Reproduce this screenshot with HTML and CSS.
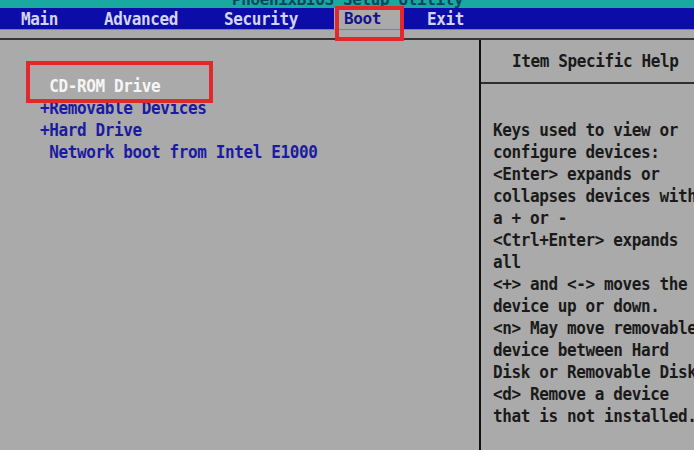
FILE: index.html
```html
<!DOCTYPE html>
<html>
<head>
<meta charset="utf-8">
<link rel="stylesheet" href="styles.css">
</head>
<body>
<div class="screen">
  <header class="top">
    <div class="title-strip"><div class="title">PhoenixBIOS Setup Utility</div></div>
    <nav class="menu">
      <span class="menu-item">Main</span>
      <span class="menu-item">Advanced</span>
      <span class="menu-item">Security</span>
      <span class="menu-item active">Boot</span>
      <span class="menu-item">Exit</span>
    </nav>
    <div class="band"></div>
    <div class="mark mark-boot"></div>
  </header>
  <main class="body">
    <section class="left">
      <div class="items">
        <div class="item selected"> CD-ROM Drive</div>
        <div class="item">+Removable Devices</div>
        <div class="item">+Hard Drive</div>
        <div class="item"> Network boot from Intel E1000</div>
      </div>
      <div class="mark mark-item"></div>
    </section>
    <aside class="help">
      <div class="help-head"><span class="tall">Item Specific Help</span></div>
      <div class="help-text">
        <div class="line">Keys used to view or</div>
        <div class="line">configure devices:</div>
        <div class="line">&lt;Enter&gt; expands or</div>
        <div class="line">collapses devices with</div>
        <div class="line">a + or -</div>
        <div class="line">&lt;Ctrl+Enter&gt; expands</div>
        <div class="line">all</div>
        <div class="line">&lt;+&gt; and &lt;-&gt; moves the</div>
        <div class="line">device up or down.</div>
        <div class="line">&lt;n&gt; May move removable</div>
        <div class="line">device between Hard</div>
        <div class="line">Disk or Removable Disk</div>
        <div class="line">&lt;d&gt; Remove a device</div>
        <div class="line">that is not installed.</div>
      </div>
    </aside>
  </main>
</div>
</body>
</html>
```
FILE: styles.css
```css
* { box-sizing: border-box; margin: 0; padding: 0; }
html, body { width: 694px; height: 450px; overflow: hidden; }
body {
  background: #aaaaaa;
  font-family: "DejaVu Sans Mono", "Liberation Mono", monospace;
  font-weight: bold;
  font-size: 16px;
  letter-spacing: -0.38px;
}
.screen { width: 694px; height: 450px; display: flex; flex-direction: column; }
.top { position: relative; flex: none; }
.title-strip { height: 8px; background: #19a9a0; overflow: hidden; }
.title {
  margin-top: -8px;
  padding-left: 232px;
  line-height: 16px;
  color: #0b4660;
  white-space: pre;
}
.menu {
  height: 22px;
  background: #0c0ca8;
  border-bottom: 1px solid #7a7ac8;
  display: flex;
  gap: 46px;
  padding-left: 21px;
  line-height: 22px;
  color: #d4d4f4;
  white-space: pre;
}
.menu-item { display: inline-block; transform: scaleY(1.12); }
.menu-item.active {
  background: #aaaaaa;
  color: #12128e;
  padding: 0 20px 0 10px;
  margin: 0 -20px 0 -10px;
  transform: none;
}
.band { height: 10px; border-bottom: 2px solid #353535; }
.mark { position: absolute; border: 4px solid #e2282c; }
.mark-boot { left: 335px; top: 6px; width: 69px; height: 35px; }
.body { flex: 1; display: flex; min-height: 0; }
.left {
  position: relative;
  width: 481px;
  flex: none;
  border-right: 2px solid #111111;
  padding: 35px 0 0 40px;
}
.item {
  line-height: 22px;
  height: 22px;
  color: #1a1aa2;
  white-space: pre;
  transform: scaleY(1.15);
  transform-origin: 0 55%;
}
.item.selected { color: #f6f6f6; }
.mark-item { left: 26px; top: 21px; width: 187px; height: 42px; }
.help { flex: 1; min-width: 0; overflow: hidden; color: #1a1a1a; }
.help-head {
  height: 44px;
  line-height: 42px;
  padding-left: 31px;
  border-bottom: 2px solid #2e2e2e;
  white-space: pre;
}
.tall { display: inline-block; transform: scaleY(1.15); }
.help-text { padding: 35px 0 0 12px; }
.line {
  line-height: 22px;
  height: 22px;
  white-space: pre;
  transform: scaleY(1.15);
  transform-origin: 0 55%;
}
```
